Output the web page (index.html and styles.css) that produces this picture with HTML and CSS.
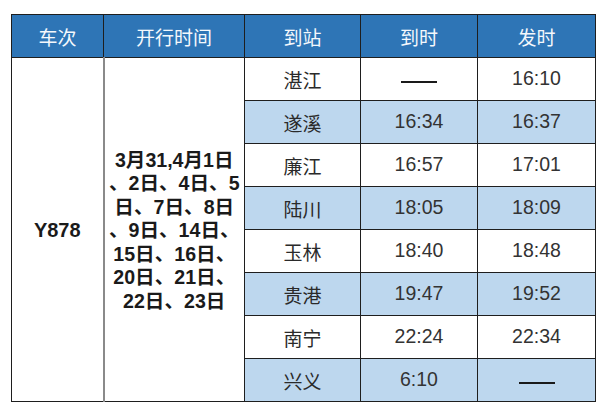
FILE: index.html
```html
<!DOCTYPE html>
<html lang="zh">
<head>
<meta charset="utf-8">
<title>Y878</title>
<link rel="stylesheet" href="styles.css">
</head>
<body>
<table class="tt">
  <colgroup>
    <col class="c1"><col class="c2"><col class="c3"><col class="c4"><col class="c5">
  </colgroup>
  <thead>
    <tr><th>车次</th><th>开行时间</th><th>到站</th><th>到时</th><th>发时</th></tr>
  </thead>
  <tbody>
    <tr>
      <td rowspan="8" class="train">Y878</td>
      <td rowspan="8" class="dates">3月31,4月1日<br>、2日、4日、5<br>日、7日、8日<br>、9日、14日、<br>15日、16日、<br>20日、21日、<br>22日、23日</td>
      <td>湛江</td><td><span class="dash"></span></td><td class="num">16:10</td>
    </tr>
    <tr class="alt"><td>遂溪</td><td class="num">16:34</td><td class="num">16:37</td></tr>
    <tr><td>廉江</td><td class="num">16:57</td><td class="num">17:01</td></tr>
    <tr class="alt"><td>陆川</td><td class="num">18:05</td><td class="num">18:09</td></tr>
    <tr><td>玉林</td><td class="num">18:40</td><td class="num">18:48</td></tr>
    <tr class="alt"><td>贵港</td><td class="num">19:47</td><td class="num">19:52</td></tr>
    <tr><td>南宁</td><td class="num">22:24</td><td class="num">22:34</td></tr>
    <tr class="alt"><td>兴义</td><td class="num">6:10</td><td><span class="dash"></span></td></tr>
  </tbody>
</table>
</body>
</html>
```
FILE: styles.css
```css
html, body {
  margin: 0;
  padding: 0;
  background: #ffffff;
}
body {
  padding: 14px 0 0 11px;
  font-family: "Liberation Sans", "Noto Sans CJK SC", sans-serif;
  color: #262626;
}
.tt {
  border-collapse: collapse;
  table-layout: fixed;
  width: 584px;
}
.c1 { width: 92px; }
.c2 { width: 141px; }
.c3 { width: 116px; }
.c4 { width: 117px; }
.c5 { width: 118px; }
.tt th, .tt td {
  border: 1.5px solid #1e1e1e;
  text-align: center;
  vertical-align: middle;
  padding: 0;
  height: 42px;
  font-size: 19px;
  font-weight: normal;
  line-height: 1;
}
.tt th {
  background: #2e75b6;
  color: #f4f8fc;
  font-family: "Noto Sans CJK SC", sans-serif;
  font-size: 19px;
}
.tt tbody td {
  font-family: "Noto Sans CJK SC", sans-serif;
  color: #2a2a2a;
}
.tt tbody td.num {
  font-family: "Liberation Sans", sans-serif;
  color: #333333;
  font-size: 19.5px;
}
.tt tbody td.train {
  font-family: "Liberation Sans", sans-serif;
  font-weight: bold;
  font-size: 20px;
  color: #1a1a1a;
  border-right: 2px solid #8a8a8a;
}
.tt tbody td.dates {
  font-family: "Liberation Sans", "Noto Sans CJK SC", sans-serif;
  font-weight: bold;
  font-size: 19.6px;
  line-height: 23.5px;
  color: #1a1a1a;
  white-space: nowrap;
  padding-top: 3px;
}
.tt tr.alt td {
  background: #bdd7ee;
}
.dash {
  display: inline-block;
  width: 36px;
  height: 2px;
  background: #1a1a1a;
  vertical-align: middle;
}
```
